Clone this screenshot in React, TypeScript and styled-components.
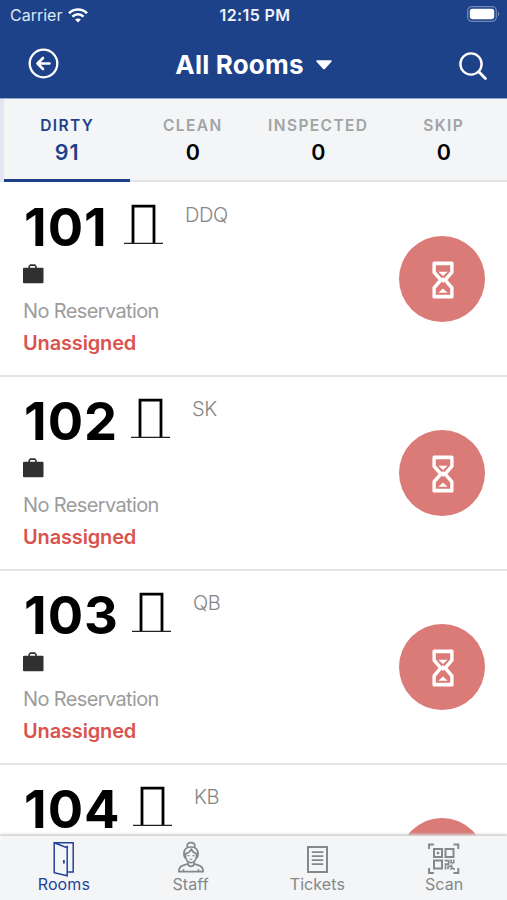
import React from "react";
import styled, { createGlobalStyle } from "styled-components";

const GlobalStyle = createGlobalStyle`
  * { box-sizing: border-box; }
  body { margin: 0; background: #fff; font-family: Inter, "Liberation Sans", sans-serif; }
`;

const Screen = styled.div`
  width: 507px;
  height: 900px;
  display: flex;
  flex-direction: column;
  overflow: hidden;
  background: #fff;
`;

const Header = styled.header`
  height: 99px;
  flex: none;
  background: #1e4289;
  color: #fff;
  border-bottom: 1px solid #9aa7cf;
`;

const StatusBar = styled.div`
  height: 30px;
  display: grid;
  grid-template-columns: 1fr auto 1fr;
  align-items: center;
  padding: 0 7px 0 10px;
`;

const Carrier = styled.div`
  display: flex;
  align-items: center;
  gap: 6px;
  color: #dfe6f4;
  font-size: 16px;
  line-height: 30px;
  letter-spacing: 0;
`;

const Clock = styled.div`
  font-size: 16px;
  font-weight: 600;
  line-height: 30px;
  letter-spacing: 0.4px;
  color: #f0f3fa;
`;

const BatterySlot = styled.div`
  display: flex;
  justify-content: flex-end;
  height: 16px;
  margin-top: -2px;
`;

const TitleBar = styled.div`
  height: 68px;
  display: grid;
  grid-template-columns: 52px 1fr 60px;
  align-items: center;
  padding: 0 20px 0 28px;
`;

const IconButton = styled.button<{ $end?: boolean }>`
  border: 0;
  padding: ${(p) => (p.$end ? "3px 0 0" : "0 0 1px")};
  background: none;
  color: inherit;
  display: flex;
  justify-content: ${(p) => (p.$end ? "flex-end" : "flex-start")};
`;

const Title = styled.h1`
  margin: 0;
  padding-top: 2px;
  display: flex;
  align-items: center;
  justify-content: center;
  gap: 12px;
  font-size: 26px;
  font-weight: 700;
  line-height: 32px;
  letter-spacing: 0.2px;
`;

const Tabs = styled.div`
  flex: none;
  height: 83px;
  display: grid;
  grid-template-columns: repeat(4, 125.5px);
  border-left: 4px solid #e3e7f4;
  background: #f3f5f7;
  box-shadow: inset 0 -2px 0 #e3e4e5;
`;

const Tab = styled.div<{ $active?: boolean }>`
  display: flex;
  flex-direction: column;
  align-items: center;
  padding-top: 17px;
  color: ${(p) => (p.$active ? "#1e4289" : "#a1a3a4")};
  border-bottom: 3px solid ${(p) => (p.$active ? "#1e3f8a" : "transparent")};
`;

const TabLabel = styled.span`
  font-size: 15.5px;
  font-weight: 600;
  line-height: 20px;
  letter-spacing: 1.4px;
  margin-right: -1px;
`;

const TabCount = styled.span<{ $active?: boolean }>`
  margin-top: 4px;
  font-size: 21.5px;
  font-weight: 600;
  line-height: 24px;
  letter-spacing: ${(p) => (p.$active ? "1px" : "0")};
  margin-left: 1px;
  color: ${(p) => (p.$active ? "#1e4289" : "#000")};
`;

const RoomList = styled.main`
  flex: 1;
  min-height: 0;
  overflow: hidden;
  padding-top: 1px;
`;

const Room = styled.article`
  height: 194px;
  display: flex;
  align-items: center;
  justify-content: space-between;
  padding: 0 22px 0 23px;
  border-bottom: 2px solid #e4e4e4;
`;

const RoomInfo = styled.div`
  height: 192px;
  padding-top: 17px;
`;

const RoomHeading = styled.div`
  display: flex;
  height: 54px;
`;

const RoomNumber = styled.span<{ $width: number }>`
  width: ${(p) => p.$width}px;
  padding-left: 1px;
  font-size: 52.5px;
  font-weight: 700;
  line-height: 54px;
  letter-spacing: 1px;
  color: #000;
`;

const DoorSlot = styled.span`
  width: 61px;
  padding-top: 4px;
`;

const RoomType = styled.span`
  font-size: 20px;
  line-height: 24px;
  margin-top: 3px;
  font-weight: 300;
  letter-spacing: -0.4px;
  color: #858585;
`;

const BagSlot = styled.div`
  height: 22px;
  margin-top: 10px;
`;

const Reservation = styled.div`
  margin-top: 12px;
  font-size: 20px;
  line-height: 26px;
  letter-spacing: -0.63px;
  color: #9c9c9c;
`;

const Assignment = styled.div`
  margin-top: 6px;
  font-size: 20px;
  font-weight: 600;
  line-height: 26px;
  letter-spacing: -0.15px;
  color: #d9534f;
`;

const StatusButton = styled.button`
  width: 86px;
  height: 86px;
  border: 0;
  padding: 1px 0 0 2px;
  border-radius: 50%;
  background: #db7b77;
  display: flex;
  align-items: center;
  justify-content: center;
`;

const BottomNav = styled.nav`
  flex: none;
  height: 64px;
  display: grid;
  grid-template-columns: repeat(4, 1fr);
  background: #f3f5f7;
  box-shadow: 0 -2px 2px #d4d4d4;
  z-index: 1;
`;

const NavItem = styled.div<{ $active?: boolean }>`
  display: flex;
  flex-direction: column;
  align-items: center;
  color: ${(p) => (p.$active ? "#23439a" : "#858789")};
`;

const NavIcon = styled.span`
  height: 38px;
  padding: 5px 0 0 1px;
`;

const NavLabel = styled.span`
  font-size: 16px;
  line-height: 20px;
  letter-spacing: 0.1px;
  padding-left: 1px;
`;

const WifiIcon = () => (
  <svg width="20" height="15" viewBox="0 0 20 15" fill="none" stroke="#fff" strokeWidth="2.6">
    <path d="M1 5.2C6.2.3 13.8.3 19 5.2" />
    <path d="M4.4 8.6c3.3-3 7.9-3 11.2 0" />
    <path d="M10 14.5l-2.9-3c1.7-1.5 4.1-1.5 5.8 0z" fill="#fff" stroke="none" />
  </svg>
);

const BatteryIcon = () => (
  <svg width="33" height="16" viewBox="0 0 33 16">
    <rect x=".7" y=".7" width="28.6" height="14.6" rx="4.2" fill="none" stroke="#7388b8" strokeWidth="1.3" />
    <rect x="2.8" y="2.8" width="24.4" height="10.4" rx="2.4" fill="#fff" />
    <path d="M31 5.5c1.7.8 1.7 4.2 0 5z" fill="#7388b8" />
  </svg>
);

const BackIcon = () => (
  <svg width="31" height="31" viewBox="0 0 31 31" fill="none" stroke="#fff" strokeWidth="2.3" strokeLinecap="round" strokeLinejoin="round">
    <circle cx="15.5" cy="15.5" r="13.8" />
    <path d="M21.5 15.5H9.5M15 10l-5.5 5.5L15 21" strokeWidth="2.6" />
  </svg>
);

const SearchIcon = () => (
  <svg width="28" height="28" viewBox="0 0 28 28" fill="none" stroke="#fff" strokeWidth="2.4" strokeLinecap="round">
    <circle cx="12" cy="12" r="10.6" />
    <path d="M19.8 19.8l6.6 6.6" strokeWidth="2.8" />
  </svg>
);

const CaretIcon = () => (
  <svg width="16" height="10" viewBox="0 0 17 10">
    <path d="M1 0h15q1.2.5.4 1.5L9.4 9.3q-.9.8-1.8 0L.6 1.5Q-.2.5 1 0z" fill="#fff" />
  </svg>
);

const DoorwayIcon = () => (
  <svg width="39" height="41" viewBox="0 0 39 41" fill="none" stroke="#000">
    <path d="M9 39.3V2.2h21v37.1" strokeWidth="2.8" />
    <path d="M0 39.4h39" stroke="#222" strokeWidth="1.4" />
  </svg>
);

const BagIcon = () => (
  <svg width="21" height="20" viewBox="0 0 21 20">
    <path d="M6.2 4V2.6l1.3-1.5h4.2L13 2.6V4" fill="none" stroke="#333" strokeWidth="1.6" />
    <rect y="3.8" width="20.5" height="15.4" rx="1" fill="#303030" />
  </svg>
);

const HourglassIcon = () => (
  <svg width="22" height="38" viewBox="0 0 24 38" preserveAspectRatio="none" fill="none" stroke="#fff" strokeWidth="3.7" strokeLinejoin="round">
    <path d="M2.3 2.3h19.4v8.9L14.3 19l7.4 7.8v8.9H2.3v-8.9L9.7 19l-7.4-7.8z" />
    <path d="M9.5 18.5l2.5-2.5 2.5 2.5v1L12 22l-2.5-2.5z" fill="#fff" stroke="none" />
    <path d="M7 10.7h10L12 15zM12 27.5l5 4.3H7z" fill="#fff" stroke="none" />
  </svg>
);

const RoomsIcon = () => (
  <svg width="22" height="36" viewBox="0 0 22 36" fill="none" stroke="currentColor" strokeWidth="1.5">
    <path d="M1.2 1.8h19v29.3h-5.8M1.2 1.8l13 5v28L1.2 31.7z" />
    <path d="M14.2 6.8V4.7M10.9 19v3.6" strokeWidth="1.8" />
  </svg>
);

const StaffIcon = () => (
  <svg width="26" height="32" viewBox="0 -0.7 26 32" fill="none" stroke="currentColor" strokeWidth="1.7" strokeLinejoin="round">
    <path d="M9.3 5.4C8.6 2.6 10 1 13 1s4.4 1.6 3.7 4.4M7 16.5C4.6 11 6.1 5.3 13 5.3s8.4 5.7 6 11.2" />
    <path d="M6.5 12.4c3.3-.7 5.6-2.2 6.9-5 1 2.6 3.1 4.3 6.1 5M7.3 12.8c.2 5.3 2.4 8.2 5.7 8.2s5.5-2.9 5.7-8.2" />
    <path d="M9.2 14h2.6M14.2 14h2.6M11.6 17.5h2.8M9.8 19.8v2.4M16.2 19.8v2.4" strokeWidth="1.1" />
    <path d="M9.8 22L4 24.2C1.7 25 .9 26.7.9 30h24.2c0-3.3-.8-5-3.1-5.8L16.2 22c-.8 3.5-5.6 3.5-6.4 0zM5.5 27.5V30M20.5 27.5V30" />
  </svg>
);

const TicketsIcon = () => (
  <svg width="21" height="34" viewBox="0 0 21 34" fill="none" stroke="currentColor" strokeWidth="2">
    <path d="M1 6h19v25H1z" />
    <path d="M4.8 11.2h11.5M4.8 15.2h11.5M4.8 19.2h11.5M4.8 23.2h11.5" strokeWidth="1.8" />
  </svg>
);

const ScanIcon = () => (
  <svg width="32" height="33" viewBox="0.5 0 32 33" fill="none" stroke="currentColor" strokeWidth="2">
    <path d="M1.6 8V3.4h4.8M26 3.4h4.8V8M30.8 27v5H26M6.4 32H1.6v-5" />
    <path d="M6.5 8h8v8h-8zM18 8h8v8h-8zM6.5 19.5h8v8h-8z" />
    <path d="M9.3 10.8h2.4v2.4H9.3z" fill="currentColor" stroke="none" />
    <path d="M17 19.6h4.2v3.5H18v5.4M23.6 18.5v3.2H27M26.2 18.5v3.5M20.5 28.3v-2.9h3.6v-1.8M22.8 28.5l2-1.7 2.4 1.8" strokeWidth="1.6" />
  </svg>
);

const tabs = [
  { label: "DIRTY", count: 91, active: true },
  { label: "CLEAN", count: 0 },
  { label: "INSPECTED", count: 0 },
  { label: "SKIP", count: 0 },
];

const rooms = [
  { number: "101", type: "DDQ", numberWidth: 101 },
  { number: "102", type: "SK", numberWidth: 108 },
  { number: "103", type: "QB", numberWidth: 109 },
  { number: "104", type: "KB", numberWidth: 110 },
];

const navItems = [
  { label: "Rooms", icon: <RoomsIcon />, active: true },
  { label: "Staff", icon: <StaffIcon /> },
  { label: "Tickets", icon: <TicketsIcon /> },
  { label: "Scan", icon: <ScanIcon /> },
];

export default function App() {
  return (
    <Screen>
      <GlobalStyle />
      <Header>
        <StatusBar>
          <Carrier>
            Carrier
            <WifiIcon />
          </Carrier>
          <Clock>12:15 PM</Clock>
          <BatterySlot>
            <BatteryIcon />
          </BatterySlot>
        </StatusBar>
        <TitleBar>
          <IconButton aria-label="Back">
            <BackIcon />
          </IconButton>
          <Title>
            All Rooms
            <CaretIcon />
          </Title>
          <IconButton $end aria-label="Search">
            <SearchIcon />
          </IconButton>
        </TitleBar>
      </Header>
      <Tabs>
        {tabs.map((t) => (
          <Tab key={t.label} $active={t.active}>
            <TabLabel>{t.label}</TabLabel>
            <TabCount $active={t.active}>{t.count}</TabCount>
          </Tab>
        ))}
      </Tabs>
      <RoomList>
        {rooms.map((r) => (
          <Room key={r.number}>
            <RoomInfo>
              <RoomHeading>
                <RoomNumber $width={r.numberWidth}>{r.number}</RoomNumber>
                <DoorSlot>
                  <DoorwayIcon />
                </DoorSlot>
                <RoomType>{r.type}</RoomType>
              </RoomHeading>
              <BagSlot>
                <BagIcon />
              </BagSlot>
              <Reservation>No Reservation</Reservation>
              <Assignment>Unassigned</Assignment>
            </RoomInfo>
            <StatusButton aria-label="Waiting">
              <HourglassIcon />
            </StatusButton>
          </Room>
        ))}
      </RoomList>
      <BottomNav>
        {navItems.map((n) => (
          <NavItem key={n.label} $active={n.active}>
            <NavIcon>{n.icon}</NavIcon>
            <NavLabel>{n.label}</NavLabel>
          </NavItem>
        ))}
      </BottomNav>
    </Screen>
  );
}
